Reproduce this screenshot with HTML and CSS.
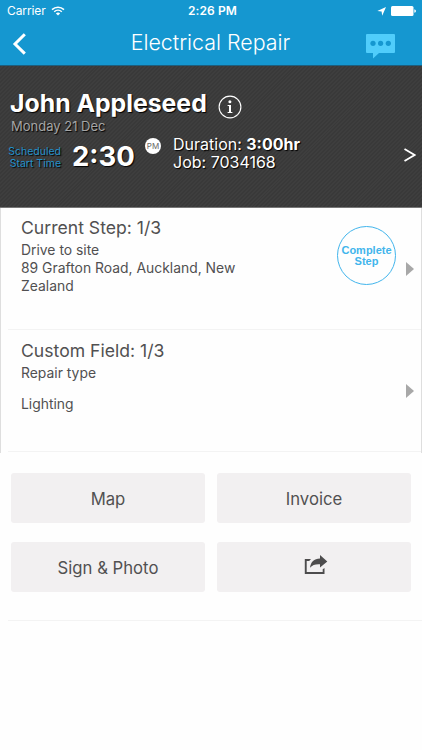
FILE: index.html
```html
<!DOCTYPE html>
<html lang="en">
<head>
  <meta charset="UTF-8" />
  <meta name="viewport" content="width=device-width, initial-scale=1.0"/>
  <title>Electrical Repair</title>
  <link rel="stylesheet" href="styles.css">
</head>
<body>

<header class="top">
  <div class="status-bar">
    <div class="carrier">
      <span>Carrier</span>
      <svg class="wifi" width="14" height="10" viewBox="0 0 14 10" fill="none" stroke="#fff" stroke-width="1.5">
        <path d="M1 3.6C4.4.3 9.6.3 13 3.6"/>
        <path d="M3.2 5.8C5.4 3.8 8.6 3.8 10.8 5.8"/>
        <path d="M7 9.4L4.9 7.4C6.1 6.3 7.9 6.3 9.1 7.4Z" fill="#fff" stroke="none"/>
      </svg>
    </div>
    <span class="clock">2:26 PM</span>
    <div class="indicators">
      <svg width="9" height="9" viewBox="0 0 9 9" fill="#fff"><path d="M9 0L5.2 8.8L4.6 4.6L.3 4Z"/></svg>
      <svg width="25" height="10" viewBox="0 0 25 10" fill="#fff"><rect width="22.5" height="10" rx="1.5"/><path d="M23.3 3.2Q25 3.6 25 5T23.3 6.8Z"/></svg>
    </div>
  </div>
  <nav class="nav-bar">
    <svg class="back" width="14" height="22" viewBox="0 0 14 22" fill="none" stroke="#fff" stroke-width="3"><path d="M12.8 1.2L3 11L12.8 20.6"/></svg>
    <h1>Electrical Repair</h1>
    <svg class="chat" width="29" height="25" viewBox="0 0 29 25">
      <path d="M1 0H28Q29 0 29 1V18Q29 19 28 19H13L7 24.6V19H1Q0 19 0 18V1Q0 0 1 0Z" fill="#50cdfb"/>
      <g fill="#1597d0"><circle cx="7" cy="9.3" r="2.6"/><circle cx="14.6" cy="9.3" r="2.6"/><circle cx="22.3" cy="9.3" r="2.6"/></g>
    </svg>
  </nav>
</header>

<section class="job">
  <div class="customer">
    <h2>John Appleseed</h2>
    <svg class="info" width="24" height="24" viewBox="0 0 24 24">
      <circle cx="12" cy="12" r="10.9" fill="none" stroke="#fff" stroke-width="1.1"/>
      <circle cx="11.9" cy="6.8" r="1.5" fill="#fff"/>
      <path d="M9.6 10H13V17.1H14.4V18H9.6V17.1H11V10.9H9.6Z" fill="#fff"/>
    </svg>
  </div>
  <p class="date">Monday 21 Dec</p>
  <div class="schedule">
    <p class="start-label">Scheduled<br>Start Time</p>
    <span class="start-time">2:30</span>
    <span class="meridiem">PM</span>
    <div class="details">
      <p class="duration">Duration: <b>3:00hr</b></p>
      <p class="job-no">Job: 7034168</p>
    </div>
    <svg class="more" width="12" height="14" viewBox="0 0 12 14" fill="none" stroke="#fff" stroke-width="1.8"><path d="M.5 1L10.6 7L.5 13"/></svg>
  </div>
</section>

<section class="steps">
  <article class="step">
    <div class="step-text">
      <h3>Current Step: 1/3</h3>
      <p class="site">Drive to site</p>
      <p class="address">89 Grafton Road, Auckland, New<br>Zealand</p>
    </div>
    <button class="complete">Complete<br>Step</button>
    <span class="arrow"></span>
  </article>
  <article class="step">
    <div class="step-text custom">
      <h3>Custom Field: 1/3</h3>
      <p class="field">Repair type</p>
      <p class="value">Lighting</p>
    </div>
    <span class="arrow"></span>
  </article>
</section>

<section class="actions">
  <button class="btn">Map</button>
  <button class="btn">Invoice</button>
  <button class="btn">Sign &amp; Photo</button>
  <button class="btn share" aria-label="Share">
    <svg width="24" height="20" viewBox="0 0 24 20" fill="#4d4c4d">
      <path d="M7 4.1H.8V18.9H20.5V13L18.7 14.3V17.1H2.7V5.9H5.2Z"/>
      <path d="M16 0L23.3 6.4L16 12.4V9.3C11.5 9 8.4 10 6 12.7C6.7 7 10 3.7 16 3.5Z"/>
    </svg>
  </button>
</section>

</body>
</html>
```
FILE: styles.css
```css
:root {
  --blue: #1597d0;
  --light-blue: #42b5ec;
  --text: #515051;
}

* {
  box-sizing: border-box;
}

body {
  margin: 0;
  height: 750px;
  overflow: hidden;
  font-family: Inter, sans-serif;
  background-color: #fefefe;
  color: var(--text);
  white-space: nowrap;
}

h1, h2, h3, p {
  margin: 0;
}

svg {
  display: block;
  flex: none;
}

button {
  font-family: inherit;
  padding: 0;
  cursor: pointer;
}

.top {
  height: 66px;
  background: var(--blue);
  border-bottom: 1px solid #1d5e7d;
  color: #fff;
}

.status-bar {
  display: grid;
  grid-template-columns: 1fr auto 1fr;
  align-items: center;
  height: 22px;
  padding: 0 6px 0 7px;
  font-size: 12px;
  line-height: 22px;
}

.carrier, .indicators {
  display: flex;
  align-items: center;
}

.carrier {
  gap: 5px;
  letter-spacing: -0.1px;
}

.clock {
  padding-left: 2px;
  font-weight: 600;
  letter-spacing: 0.1px;
}

.indicators {
  justify-content: flex-end;
  gap: 5px;
}

.nav-bar {
  display: grid;
  grid-template-columns: 60px 1fr 60px;
  align-items: center;
  height: 43px;
  padding: 0 27px 3px 12px;
}

.nav-bar h1 {
  padding-left: 14px;
  font-size: 21.4px;
  font-weight: 300;
  line-height: 26px;
  text-align: center;
}

.chat {
  justify-self: end;
  margin-top: 8px;
}

.back {
  margin-top: 4px;
}

.job {
  height: 142px;
  padding: 23px 6px 0 8px;
  border-bottom: 1px solid #777;
  background: repeating-linear-gradient(135deg, #393939 0 1.4px, #3e3e3e 1.4px 2.8px);
  color: #fff;
  text-shadow: 1px 1px 1px #000;
}

.customer {
  display: flex;
  gap: 11px;
  height: 28px;
  padding-left: 2px;
}

.customer h2 {
  font-size: 24.8px;
  font-weight: 700;
  line-height: 28px;
}

.info {
  margin-top: 6px;
}

.date {
  padding-left: 3px;
  color: #a5a5a5;
  font-size: 13px;
  line-height: 18px;
}

.schedule {
  display: flex;
  height: 44px;
}

.start-label {
  width: 53px;
  padding-top: 11px;
  color: #2591cb;
  font-size: 10.5px;
  line-height: 12px;
  text-align: right;
}

.start-time {
  width: 74px;
  padding-left: 11px;
  font-size: 27.5px;
  font-weight: 700;
  line-height: 42px;
}

.meridiem {
  width: 16px;
  height: 16px;
  margin: 3px 0 0 10px;
  border-radius: 50%;
  background: #fff;
  color: #666;
  font-size: 8px;
  line-height: 16px;
  text-align: center;
  text-shadow: none;
}

.details {
  flex: 1;
  margin-left: 12px;
  font-size: 16px;
  line-height: 18px;
}

.more {
  margin-top: 13px;
}

.steps {
  height: 245px;
  border: solid #dedede;
  border-width: 0 1px;
}

.step {
  display: flex;
  height: 122px;
  margin-left: 7px;
  padding: 8px 7px 0 13px;
  border-bottom: 1px solid #f3f3f3;
}

.step-text {
  flex: 1;
  font-size: 13.9px;
  line-height: 18px;
}

.custom {
  padding-top: 1px;
}

.step h3 {
  font-size: 17.6px;
  font-weight: 400;
  line-height: 24px;
}

.site, .field {
  margin-top: 1px;
}

.value {
  margin-top: 13px;
}

.complete {
  width: 59px;
  height: 59px;
  margin: 10px 10px 0 0;
  border: 1px solid var(--light-blue);
  border-radius: 50%;
  background: none;
  color: var(--light-blue);
  font: bold 11px/11px "Liberation Sans", sans-serif;
}

.arrow {
  height: 0;
  margin-top: 46px;
  border: solid transparent;
  border-width: 7px 0 7px 8px;
  border-left-color: #a8a8a8;
}

.actions {
  display: grid;
  grid-template-columns: 194px 194px;
  gap: 19px 12px;
  height: 168px;
  margin-left: 8px;
  padding: 20px 0 28px 3px;
  border-bottom: 1px solid #f3f3f3;
}

.btn {
  display: flex;
  align-items: center;
  justify-content: center;
  height: 50px;
  padding-top: 2px;
  border: 0;
  border-radius: 3px;
  background: #f2f0f1;
  color: var(--text);
  font-size: 16.7px;
}

.share {
  padding: 0 0 5px 4px;
}
```
